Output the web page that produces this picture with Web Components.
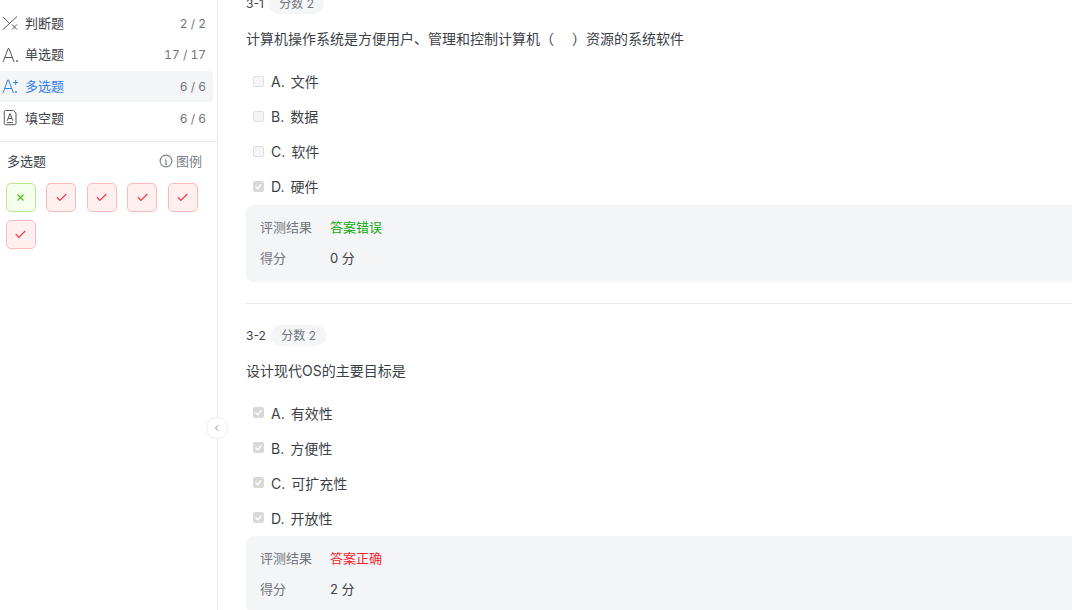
<!DOCTYPE html>
<html lang="zh">
<head>
<meta charset="utf-8">
<title>题目集</title>
<style>
  html, body { margin: 0; height: 100%; overflow: hidden; background: #fff; }
  body { font-family: Inter, "Noto Sans CJK SC", sans-serif; font-size: 14px; color: #3b3f47; }
  exam-page { height: 610px; }
</style>
</head>
<body>
<exam-page>
  <exam-sidebar slot="side">
    <type-row slot="types" icon="judge" name="判断题" count="2 / 2"></type-row>
    <type-row slot="types" icon="single" name="单选题" count="17 / 17"></type-row>
    <type-row slot="types" icon="multi" name="多选题" count="6 / 6" active></type-row>
    <type-row slot="types" icon="fill" name="填空题" count="6 / 6"></type-row>
    <answer-chip slot="chips" kind="wrong"></answer-chip>
    <answer-chip slot="chips"></answer-chip>
    <answer-chip slot="chips"></answer-chip>
    <answer-chip slot="chips"></answer-chip>
    <answer-chip slot="chips"></answer-chip>
    <answer-chip slot="chips"></answer-chip>
  </exam-sidebar>

  <question-card num="3-1" score="分数 2" result="答案错误" status="bad" got="0 分" divided>
    <span slot="title">计算机操作系统是方便用户、管理和控制计算机（<span style="display:inline-block;width:18px"></span>）资源的系统软件</span>
    <option-row letter="A." text="文件"></option-row>
    <option-row letter="B." text="数据"></option-row>
    <option-row letter="C." text="软件"></option-row>
    <option-row letter="D." text="硬件" checked></option-row>
  </question-card>

  <question-card num="3-2" score="分数 2" result="答案正确" status="good" got="2 分">
    <span slot="title">设计现代OS的主要目标是</span>
    <option-row letter="A." text="有效性" checked></option-row>
    <option-row letter="B." text="方便性" checked></option-row>
    <option-row letter="C." text="可扩充性" checked></option-row>
    <option-row letter="D." text="开放性" checked></option-row>
  </question-card>
</exam-page>

<script>
const ICONS = {
  judge: `<path d="M1 15.5 15 2.5M1 3l6 6M10 10.5l5 5M15 10.5l-5 5"/>`,
  single: `<path d="M1 16 6.2 2.5h.8L12 16M2.8 11.5h7.6"/><circle cx="15" cy="15" r=".9" fill="currentColor" stroke="none"/>`,
  multi: `<path d="M1 16 5.7 3h.8L11.4 16M2.7 11.5h7.2M13.7 3v5M11.2 5.5h5"/><circle cx="14" cy="15" r=".9" fill="currentColor" stroke="none"/>`,
  fill: `<path d="M3.5 1.5h8l2.5 2.5v10.5a1.2 1.2 0 0 1-1.2 1.2H3.5a1.2 1.2 0 0 1-1.2-1.2V2.7a1.2 1.2 0 0 1 1.2-1.2zM5.2 11.8 8 4.5l2.8 7.3M6.2 9.5h3.6M5 13.6h6"/>`
};

class ExamPage extends HTMLElement {
  constructor() {
    super();
    this.attachShadow({ mode: 'open' });
    this.shadowRoot.innerHTML = `
      <style>
        :host { display: flex; overflow: hidden; }
        aside { flex: 0 0 218px; }
        main { flex: 1; min-width: 0; padding: 0 0 0 28px; margin-top: -6.7px; margin-right: -40px; }
      </style>
      <aside><slot name="side"></slot></aside>
      <main><slot></slot></main>
    `;
  }
}

class ExamSidebar extends HTMLElement {
  constructor() {
    super();
    this.attachShadow({ mode: 'open' });
    this.shadowRoot.innerHTML = `
      <style>
        :host { display: block; position: relative; box-sizing: border-box; height: 610px; border-right: 1px solid #e9eaec; }
        .types { padding: 7.2px 4px 6.8px 0; border-bottom: 1px solid #e9eaec; }
        .head { display: flex; justify-content: space-between; align-items: center; padding: 9px 15px 0 7px; height: 20px; color: #3b3f47; font-size: 13px; }
        .legend { display: flex; align-items: center; gap: 3px; color: #7a7f88; }
        .legend svg { width: 14px; height: 14px; }
        .chips { display: flex; flex-wrap: wrap; gap: 7.3px 10.9px; padding: 12.3px 12px 0 6px; }
        .toggle {
          position: absolute; right: -11px; top: 417px; width: 20px; height: 20px; border-radius: 50%;
          background: #fff; border: 1px solid #eceded; display: flex; align-items: center; justify-content: center;
        }
      </style>
      <div class="types"><slot name="types"></slot></div>
      <div class="head">
        <span>多选题</span>
        <span class="legend">
          <svg viewBox="0 0 14 14" fill="none" stroke="currentColor" stroke-width="1.1"><circle cx="7" cy="7" r="5.9"/><path d="M7 6v4.2M5.8 10.2h2.4M5.8 6H7"/><circle cx="7" cy="4" r=".6" fill="currentColor" stroke="none"/></svg>
          图例
        </span>
      </div>
      <div class="chips"><slot name="chips"></slot></div>
      <div class="toggle">
        <svg width="8" height="8" viewBox="0 0 8 8" fill="none" stroke="#8b8f96"><path d="M5 1.5 2.5 4 5 6.5"/></svg>
      </div>
    `;
  }
}

class TypeRow extends HTMLElement {
  constructor() {
    super();
    this.attachShadow({ mode: 'open' });
  }
  connectedCallback() {
    const active = this.hasAttribute('active');
    this.shadowRoot.innerHTML = `
      <style>
        :host { display: flex; align-items: center; height: 31.7px; padding: 0 7px 0 2px; border-radius: 0 4px 4px 0;
          font-size: 13px; color: ${active ? '#2f80f0' : '#3b3f47'}; background: ${active ? '#f4f5f7' : 'transparent'}; }
        svg { width: 18px; height: 18px; margin-right: 5px; flex: none; color: ${active ? '#2f80f0' : '#55585e'}; }
        .n { flex: 1; margin-top: -2px; }
        .c { font-size: 12px; color: #70747c; font-variant-numeric: tabular-nums; }
      </style>
      <svg viewBox="0 0 18 18" fill="none" stroke="currentColor" stroke-width="1">${ICONS[this.getAttribute('icon')]}</svg>
      <span class="n">${this.getAttribute('name')}</span>
      <span class="c">${this.getAttribute('count')}</span>
    `;
  }
}

class AnswerChip extends HTMLElement {
  constructor() {
    super();
    this.attachShadow({ mode: 'open' });
  }
  connectedCallback() {
    const wrong = this.getAttribute('kind') === 'wrong';
    this.shadowRoot.innerHTML = `
      <style>
        :host { display: flex; align-items: center; justify-content: center; box-sizing: border-box; width: 29.6px; height: 29.4px;
          border-radius: 5px; border: 1px solid ${wrong ? '#b7eb8f' : '#ffb8b8'}; background: ${wrong ? '#f6ffed' : '#fff0f0'}; }
      </style>
      ${wrong
        ? `<svg width="9" height="9" viewBox="0 0 9 9" fill="none" stroke="#52c41a" stroke-width="1.2"><path d="M1.5 1.5l6 6M7.5 1.5l-6 6"/></svg>`
        : `<svg width="11" height="9" viewBox="0 0 11 9" fill="none" stroke="#f5333f" stroke-width="1.2"><path d="M.8 4.2 3.8 7.5 10.3 1"/></svg>`}
    `;
  }
}

class QuestionCard extends HTMLElement {
  constructor() {
    super();
    this.attachShadow({ mode: 'open' });
  }
  connectedCallback() {
    const a = n => this.getAttribute(n);
    const good = a('status') === 'good';
    this.shadowRoot.innerHTML = `
      <style>
        :host { display: block; font-size: 13px; color: #3b3f47; }
        .meta { display: flex; align-items: center; gap: 5.5px; height: 21px; font-size: 12px; }
        .pill { background: #f4f5f7; border-radius: 11px; padding: 0 10px; height: 21px; line-height: 21px; color: #70747c; }
        .title { margin-top: 14px; height: 22px; line-height: 22px; font-size: 14px; }
        .opts { margin-top: 13.5px; }
        .res { background: #f4f5f7; border-radius: 8px; padding: 6px 14px; height: 65px; margin-top: 1px; }
        .line { display: flex; height: 31px; align-items: center; }
        .k { width: 70px; color: #70747c; }
        .bad { color: #10a810; } .good { color: #f5222d; }
        hr { border: 0; border-top: 1px solid #e6e7e9; margin: 21px 0; }
      </style>
      <div class="meta"><span>${a('num')}</span><span class="pill">${a('score')}</span></div>
      <div class="title"><slot name="title"></slot></div>
      <div class="opts"><slot></slot></div>
      <div class="res">
        <div class="line"><span class="k">评测结果</span><span class="${good ? 'good' : 'bad'}">${a('result')}</span></div>
        <div class="line"><span class="k">得分</span><span>${a('got')}</span></div>
      </div>
      ${this.hasAttribute('divided') ? '<hr>' : ''}
    `;
  }
}

class OptionRow extends HTMLElement {
  constructor() {
    super();
    this.attachShadow({ mode: 'open' });
  }
  connectedCallback() {
    const on = this.hasAttribute('checked');
    this.shadowRoot.innerHTML = `
      <style>
        :host { display: flex; align-items: center; height: 35px; padding-left: 7px; font-size: 14px; color: #3b3f47; }
        .box { box-sizing: border-box; width: 11px; height: 11px; border-radius: 2px; margin-right: 7px;
          display: flex; align-items: center; justify-content: center;
          background: ${on ? '#d9d9d9' : '#f5f5f5'}; border: 1px solid ${on ? '#d9d9d9' : '#dedfe1'}; }
        .l { margin-right: 6px; }
      </style>
      <span class="box">${on ? `<svg width="9" height="9" viewBox="0 0 9 9" fill="none" stroke="#fff" stroke-width="1.3"><path d="M1.5 4.5 3.7 6.7 7.5 2.3"/></svg>` : ''}</span>
      <span><span class="l">${this.getAttribute('letter')}</span>${this.getAttribute('text')}</span>
    `;
  }
}

customElements.define('exam-page', ExamPage);
customElements.define('exam-sidebar', ExamSidebar);
customElements.define('type-row', TypeRow);
customElements.define('answer-chip', AnswerChip);
customElements.define('question-card', QuestionCard);
customElements.define('option-row', OptionRow);
</script>
</body>
</html>
